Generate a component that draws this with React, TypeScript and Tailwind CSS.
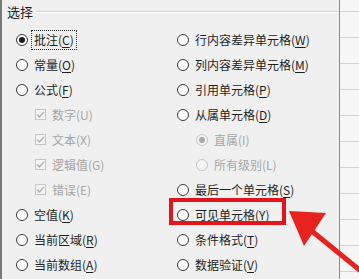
import React from "react";

type Item = {
  label: string;
  key?: string;
  kind?: "radio" | "check" | "subradio";
  checked?: boolean;
  disabled?: boolean;
  focus?: boolean;
};

const leftItems: Item[] = [
  { label: "批注", key: "C", checked: true, focus: true },
  { label: "常量", key: "O" },
  { label: "公式", key: "F" },
  { label: "数字(U)", kind: "check", checked: true, disabled: true },
  { label: "文本(X)", kind: "check", checked: true, disabled: true },
  { label: "逻辑值(G)", kind: "check", checked: true, disabled: true },
  { label: "错误(E)", kind: "check", checked: true, disabled: true },
  { label: "空值", key: "K" },
  { label: "当前区域", key: "R" },
  { label: "当前数组", key: "A" },
];

const rightItems: Item[] = [
  { label: "行内容差异单元格", key: "W" },
  { label: "列内容差异单元格", key: "M" },
  { label: "引用单元格", key: "P" },
  { label: "从属单元格", key: "D" },
  { label: "直属(I)", kind: "subradio", checked: true, disabled: true },
  { label: "所有级别(L)", kind: "subradio", disabled: true },
  { label: "最后一个单元格", key: "S" },
  { label: "可见单元格", key: "Y" },
  { label: "条件格式", key: "T" },
  { label: "数据验证", key: "V" },
];

function Radio({ checked, disabled }: { checked?: boolean; disabled?: boolean }) {
  return (
    <span
      className={`flex h-[12px] w-[12px] shrink-0 items-center justify-center rounded-full border ${
        disabled ? "border-[#c4c4c4] bg-[#f4f4f4]" : "border-[#3a3a3a] bg-white"
      }`}
    >
      {checked && (
        <span className={`h-[6px] w-[6px] rounded-full ${disabled ? "bg-[#a8a8a8]" : "bg-[#1e1e1e]"}`} />
      )}
    </span>
  );
}

function Check() {
  return (
    <span className="flex h-[11px] w-[11px] shrink-0 items-center justify-center border border-[#c6c6c6] bg-[#f4f4f4]">
      <svg width="9" height="9" viewBox="0 0 9 9">
        <path d="M1 4.6 L3.4 7 L8 1.8" fill="none" stroke="#a9a9a9" strokeWidth="1.2" />
      </svg>
    </span>
  );
}

function Row({ item }: { item: Item }) {
  const kind = item.kind ?? "radio";
  const text = (
    <span className={item.disabled ? "text-[#a6a6a6]" : "text-[#1f1f1f]"}>
      {item.label}
      {item.key && (
        <>
          (<span className="underline underline-offset-2">{item.key}</span>)
        </>
      )}
    </span>
  );
  return (
    <div className="flex h-[25px] items-center">
      {kind === "radio" && <Radio checked={item.checked} />}
      {kind === "subradio" && (
        <span className="ml-[19px]">
          <Radio checked={item.checked} disabled />
        </span>
      )}
      {kind === "check" && (
        <span className="ml-[19px]">
          <Check />
        </span>
      )}
      <span
        className={`ml-[5px] px-[1px] leading-[16px] ${
          item.focus ? "outline outline-1 outline-dotted outline-[#333] outline-offset-[1px]" : ""
        }`}
      >
        {text}
      </span>
    </div>
  );
}

export default function App() {
  return (
    <div
      className="flex h-[279px] w-[359px] overflow-hidden bg-[#f0f0f0] text-[12px]"
      style={{ fontFamily: '"Noto Sans CJK SC", "Noto Sans", sans-serif' }}
    >
      <div className="w-[2px] shrink-0 bg-[#7a7a7a]" />
      <div className="relative w-[337px] shrink-0">
        <div className="flex h-[25px] items-start pt-[3px]">
          <span className="pl-[5px] pr-[3px] text-[13px] leading-[17px] text-[#1f1f1f]">选择</span>
          <div className="mt-[8px] flex-1 border-t border-[#d4d4d4] border-b-white pb-0 shadow-[0_1px_0_#ffffff]" />
        </div>
        <div className="mt-[2px] flex">
          <div className="ml-[14px] w-[161px]">
            {leftItems.map((it) => (
              <Row key={it.label} item={it} />
            ))}
          </div>
          <div>
            {rightItems.map((it) => (
              <Row key={it.label} item={it} />
            ))}
          </div>
        </div>
        <div className="absolute left-[167px] top-[198px] h-[27px] w-[117px] border-[4px] border-[#e3141c]" />
      </div>
      <div className="w-px shrink-0 bg-[#8c8c8c]" />
      <div className="flex flex-1 flex-col bg-[#f6f6f6]">
        <div className="h-[12px] shrink-0 border-b border-[#d2d2d2]" />
        {Array.from({ length: 11 }).map((_, i) => (
          <div key={i} className="h-[26px] shrink-0 border-b border-[#d2d2d2]" />
        ))}
      </div>
      <svg className="pointer-events-none absolute left-0 top-0" width="359" height="279" viewBox="0 0 359 279">
        <line x1="362" y1="272" x2="302" y2="223" stroke="#e8221f" strokeWidth="5" />
        <polygon points="289,211 326,213 304,246" fill="#e8221f" />
      </svg>
    </div>
  );
}
